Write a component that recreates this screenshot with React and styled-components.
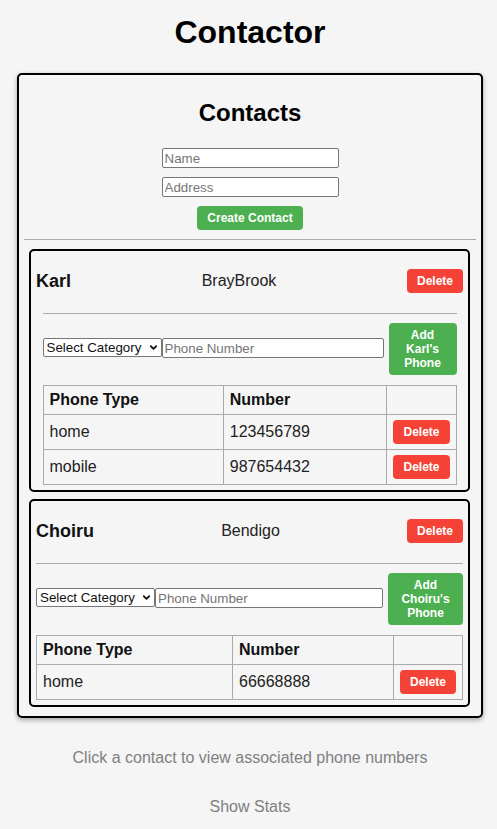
import { ChevronDown } from "lucide-react";
import styled, { createGlobalStyle } from "styled-components";

const GlobalStyle = createGlobalStyle`
  body {
    margin: 0;
    background: #f5f5f5;
    font-family: "Liberation Sans", Arial, sans-serif;
    color: #222;
  }
`;

const Page = styled.div`
  padding: 0 0 20px 3px;
  display: flex;
  flex-direction: column;
  align-items: center;
`;

const Title = styled.h1`
  font-size: 32px;
  font-weight: bold;
  line-height: 37px;
  margin: 14px 0 22px;
  color: #000;
`;

const MainCard = styled.div`
  box-sizing: border-box;
  width: 466px;
  border: 2px solid #000;
  border-radius: 5px;
  box-shadow: 0 2px 5px rgba(0, 0, 0, 0.35);
  padding: 24px 5px 9px;
`;

const SubTitle = styled.h2`
  font-size: 24px;
  line-height: 28px;
  margin: 0 0 21px;
  text-align: center;
  color: #000;
`;

const CreateForm = styled.div`
  display: flex;
  flex-direction: column;
  align-items: center;
  gap: 9px;
`;

const TextInput = styled.input`
  box-sizing: border-box;
  width: ${(p) => (p.$width ? `${p.$width}px` : "auto")};
  flex: ${(p) => (p.$grow ? 1 : "none")};
  min-width: 0;
  height: 20px;
  margin-top: ${(p) => (p.$lift ? "-2px" : "0")};
  border: 1px solid #767676;
  border-radius: 2px;
  background: #fff;
  padding: 1px 2px;
  font-family: "Liberation Sans", Arial, sans-serif;
  font-size: 13.333px;
  &::placeholder {
    color: #757575;
  }
`;

const Button = styled.button`
  border: none;
  border-radius: 4px;
  padding: 5px 10px;
  background: ${(p) => (p.$danger ? "#f44336" : "#4caf50")};
  color: #fff;
  font-family: "Liberation Sans", Arial, sans-serif;
  font-size: 12px;
  font-weight: bold;
  line-height: 14px;
  cursor: pointer;
  flex: none;
  width: ${(p) => (p.$width ? `${p.$width}px` : "auto")};
`;

const Divider = styled.hr`
  border: none;
  border-top: 1px solid #aaa;
  margin: ${(p) => p.$margin || "9px 0"};
`;

const ContactList = styled.div`
  display: flex;
  flex-direction: column;
  gap: 7px;
  margin: 0 6px 0 5px;
`;

const ContactCard = styled.div`
  border: 2px solid #000;
  border-radius: 5px;
  padding: 18px 5px 5px;
`;

const ContactHeader = styled.div`
  display: flex;
  justify-content: space-between;
  align-items: center;
`;

const ContactName = styled.h3`
  margin: 0;
  font-size: 18px;
  font-weight: bold;
  color: #111;
`;

const ContactAddress = styled.span`
  font-size: 16px;
  color: #222;
`;

const PhoneSection = styled.div`
  width: ${(p) => p.$width}px;
  margin: 0 auto;
`;

const PhoneRow = styled.div`
  display: flex;
  align-items: center;
`;

const SelectWrap = styled.div`
  position: relative;
  flex: none;
  width: 119px;
  margin-top: -3px;
`;

const Select = styled.select`
  appearance: none;
  box-sizing: border-box;
  width: 100%;
  height: 19px;
  border: 1px solid #767676;
  border-radius: 2px;
  background: #fff;
  padding: 0 16px 0 3px;
  font-family: "Liberation Sans", Arial, sans-serif;
  font-size: 13.333px;
  color: #111;
`;

const SelectChevron = styled(ChevronDown)`
  position: absolute;
  right: 3px;
  top: 4px;
  pointer-events: none;
`;

const Spacer = styled.div`
  width: 5px;
  flex: none;
`;

const PhoneTable = styled.table`
  width: 100%;
  border-collapse: collapse;
  margin-top: 10px;
  font-size: 16px;
`;

const HeadCell = styled.th`
  border: 1px solid #aaa;
  padding: 5px 6px;
  text-align: left;
  font-weight: bold;
  color: #111;
  line-height: 18px;
  width: ${(p) => (p.$shrink ? "1%" : "auto")};
`;

const Cell = styled.td`
  border: 1px solid #aaa;
  padding: 5px 6px;
  color: #222;
  line-height: 18px;
  text-align: ${(p) => (p.$center ? "center" : "left")};
  white-space: nowrap;
`;

const Hint = styled.p`
  margin: 31px 0 0;
  font-size: 16px;
  line-height: 18px;
  color: #808080;
`;

const contacts = [
  {
    name: "Karl",
    address: "BrayBrook",
    width: 414,
    buttonWidth: 68,
    phones: [
      { type: "home", number: "123456789" },
      { type: "mobile", number: "987654432" },
    ],
  },
  {
    name: "Choiru",
    address: "Bendigo",
    width: 427,
    buttonWidth: 75,
    phones: [{ type: "home", number: "66668888" }],
  },
];

const Contact = ({ contact }) => (
  <ContactCard>
    <ContactHeader>
      <ContactName>{contact.name}</ContactName>
      <ContactAddress>{contact.address}</ContactAddress>
      <Button $danger>Delete</Button>
    </ContactHeader>

    <PhoneSection $width={contact.width}>
      <Divider $margin="20px 0 9px" />
      <PhoneRow>
        <SelectWrap>
          <Select defaultValue="">
            <option value="">Select Category</option>
            <option value="home">home</option>
            <option value="mobile">mobile</option>
          </Select>
          <SelectChevron size={11} strokeWidth={4} color="#111" />
        </SelectWrap>
        <TextInput $grow $lift placeholder="Phone Number" />
        <Spacer />
        <Button $width={contact.buttonWidth}>Add {contact.name}'s Phone</Button>
      </PhoneRow>

      <PhoneTable>
        <thead>
          <tr>
            <HeadCell>Phone Type</HeadCell>
            <HeadCell>Number</HeadCell>
            <HeadCell $shrink />
          </tr>
        </thead>
        <tbody>
          {contact.phones.map((phone) => (
            <tr key={phone.number}>
              <Cell>{phone.type}</Cell>
              <Cell>{phone.number}</Cell>
              <Cell $center>
                <Button $danger>Delete</Button>
              </Cell>
            </tr>
          ))}
        </tbody>
      </PhoneTable>
    </PhoneSection>
  </ContactCard>
);

export default function App() {
  return (
    <>
      <GlobalStyle />
      <Page>
        <Title>Contactor</Title>
        <MainCard>
          <SubTitle>Contacts</SubTitle>
          <CreateForm>
            <TextInput $width={177} placeholder="Name" />
            <TextInput $width={177} placeholder="Address" />
            <Button>Create Contact</Button>
          </CreateForm>
          <Divider />
          <ContactList>
            {contacts.map((c) => (
              <Contact key={c.name} contact={c} />
            ))}
          </ContactList>
        </MainCard>
        <Hint>Click a contact to view associated phone numbers</Hint>
        <Hint>Show Stats</Hint>
      </Page>
    </>
  );
}
